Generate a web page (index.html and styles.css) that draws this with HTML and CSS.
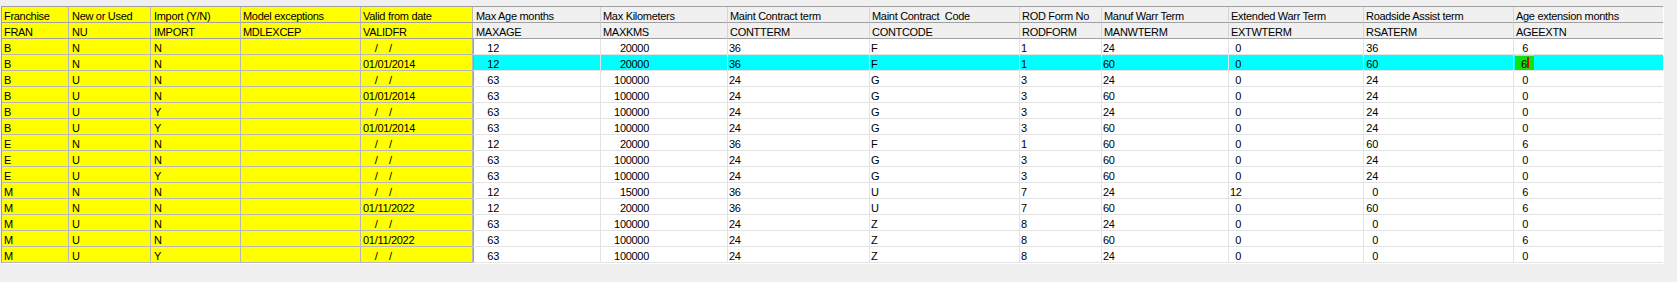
FILE: index.html
```html
<!DOCTYPE html>
<html>
<head>
<meta charset="utf-8">
<link rel="stylesheet" href="styles.css">
</head>
<body>
<div class="grid">
  <div class="row hdr">
    <div class="c y">Franchise</div><div class="c y">New or Used</div><div class="c y">Import (Y/N)</div><div class="c y">Model exceptions</div><div class="c y">Valid from date</div>
    <div class="c g first">Max Age months</div><div class="c g">Max Kilometers</div><div class="c g">Maint Contract term</div><div class="c g">Maint Contract  Code</div><div class="c g">ROD Form No</div><div class="c g">Manuf Warr Term</div><div class="c g">Extended Warr Term</div><div class="c g">Roadside Assist term</div><div class="c g">Age extension months</div>
  </div>
  <div class="row hdr hdr2">
    <div class="c y">FRAN</div><div class="c y">NU</div><div class="c y">IMPORT</div><div class="c y">MDLEXCEP</div><div class="c y">VALIDFR</div>
    <div class="c g first">MAXAGE</div><div class="c g">MAXKMS</div><div class="c g">CONTTERM</div><div class="c g">CONTCODE</div><div class="c g">RODFORM</div><div class="c g">MANWTERM</div><div class="c g">EXTWTERM</div><div class="c g">RSATERM</div><div class="c g">AGEEXTN</div>
  </div>
  <div id="body"></div>
</div>
<script src="app.js"></script>
</body>
</html>
```
FILE: app.js
```js
const rows = [
  ["B","N","N","","12","20000","36","F","1","24","0","36","6"],
  ["B","N","N","01/01/2014","12","20000","36","F","1","60","0","60","6"],
  ["B","U","N","","63","100000","24","G","3","24","0","24","0"],
  ["B","U","N","01/01/2014","63","100000","24","G","3","60","0","24","0"],
  ["B","U","Y","","63","100000","24","G","3","24","0","24","0"],
  ["B","U","Y","01/01/2014","63","100000","24","G","3","60","0","24","0"],
  ["E","N","N","","12","20000","36","F","1","60","0","60","6"],
  ["E","U","N","","63","100000","24","G","3","60","0","24","0"],
  ["E","U","Y","","63","100000","24","G","3","60","0","24","0"],
  ["M","N","N","","12","15000","36","U","7","24","12","0","6"],
  ["M","N","N","01/11/2022","12","20000","36","U","7","60","0","60","6"],
  ["M","U","N","","63","100000","24","Z","8","24","0","0","0"],
  ["M","U","N","01/11/2022","63","100000","24","Z","8","60","0","0","6"],
  ["M","U","Y","","63","100000","24","Z","8","24","0","0","0"]
];
const body = document.getElementById("body");
const esc = s => s.replace(/&/g,"&amp;").replace(/</g,"&lt;");
rows.forEach((r, i) => {
  const row = document.createElement("div");
  row.className = "row data" + (i === 1 ? " sel" : "");
  let html = "";
  html += `<div class="c y">${r[0]}</div>`;
  html += `<div class="c y">${r[1]}</div>`;
  html += `<div class="c y">${r[2]}</div>`;
  html += `<div class="c y"></div>`;
  const d = r[3] ? r[3] : "\u2007\u2007/\u2007\u2007/";
  html += `<div class="c y">${d}</div>`;
  for (let k = 4; k < 13; k++) {
    if (i === 1 && k === 12) {
      html += `<div class="c w cur"><span class="hl">${esc(r[k])}<span class="caret"></span></span></div>`;
    } else {
      html += `<div class="c w${k === 4 ? " first" : ""}">${esc(r[k])}</div>`;
    }
  }
  row.innerHTML = html;
  body.appendChild(row);
});
```
FILE: styles.css
```css
html, body {
  margin: 0;
  padding: 0;
  background: #f0f0f0;
}
body {
  font-family: "Liberation Sans", Arial, sans-serif;
  font-size: 11px;
  color: #000;
  height: 282px;
  overflow: hidden;
}
.grid {
  margin: 6px 0 0 1px;
  width: 1662px;
  border-left: 1px solid #a0a0a0;
  border-top: 1px solid #a0a0a0;
  border-right: 1px solid #a0a0a0;
  box-sizing: border-box;
  box-shadow: 1px 1px 0 #ffffff;
}
.row {
  display: grid;
  grid-template-columns: 67px 82px 90px 120px 112px 128px 127px 142px 150px 82px 127px 135px 150px 149px;
}
.c {
  box-sizing: border-box;
  height: 16px;
  padding: 3px 0 0 2px;
  line-height: 12px;
  letter-spacing: -0.3px;
  white-space: pre;
  overflow: hidden;
  border-right: 1px solid #e3e3e3;
  border-bottom: 1px solid #e3e3e3;
  background: #ffffff;
}
.c:last-child {
  border-right: none;
}
.c.y {
  background: #ffff00;
  border-right-color: #b8b8b8;
  border-bottom-color: #b8b8b8;
}
.c.g {
  background: #f0f0f0;
  border-right-color: #d6d6d6;
  border-bottom-color: #a0a0a0;
}
.hdr .c.y {
  border-bottom-color: #a0a0a0;
}
.data .c.first {
  box-shadow: inset 1px 0 0 #a0a0a0;
}
.hdr .c.first {
  padding-left: 3px;
}
.row .c:nth-child(2),
.row .c:nth-child(3) {
  padding-left: 3px;
}
.data .c.w {
  padding-left: 1px;
}
.data .c:nth-child(6) {
  text-align: right;
  padding-right: 101px;
}
.data .c:nth-child(7) {
  text-align: right;
  padding-right: 78px;
}
.data .c:nth-child(12) {
  text-align: right;
  padding-right: 122px;
}
.data .c:nth-child(13) {
  text-align: right;
  padding-right: 135px;
}
.data .c:nth-child(14) {
  text-align: right;
  padding-right: 135px;
}
.data.sel .c.w {
  background: #00ffff;
}
.data.sel .c.cur {
  text-align: left;
  padding: 0 0 0 1px;
}
.hl {
  display: inline-block;
  box-sizing: border-box;
  width: 19px;
  height: 15px;
  padding: 3px 0 0 6px;
  line-height: 12px;
  background: #12e012;
  box-shadow: inset 0 1px 0 #d8f000;
  vertical-align: top;
}
.caret {
  display: inline-block;
  width: 2px;
  height: 11px;
  background: #e00000;
  vertical-align: top;
  margin: -1px 0 0 0;
}
```
